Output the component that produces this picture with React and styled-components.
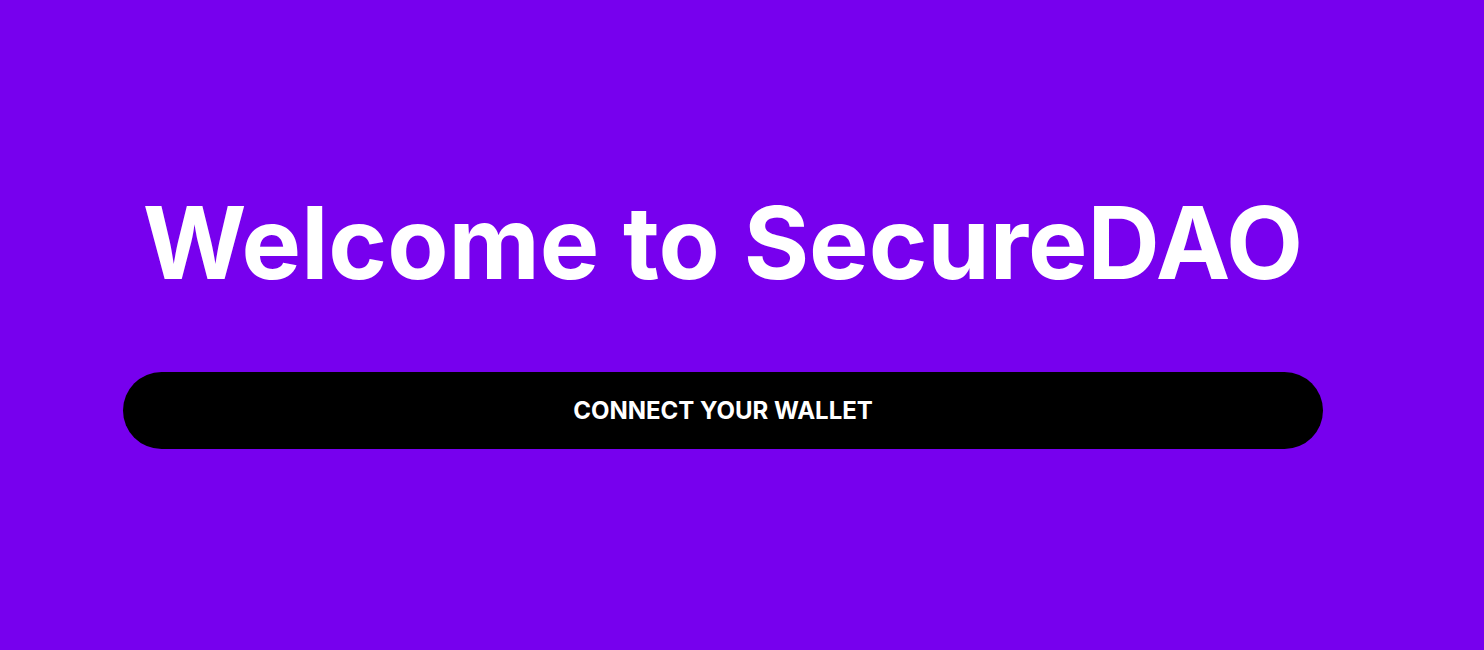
import styled, { createGlobalStyle } from "styled-components"

const GlobalStyle = createGlobalStyle`
html, body {
margin: 0;
padding: 0;
background: #7700ee;
}
body {
font-family: Inter, "Liberation Sans", sans-serif;
}
`

const Page = styled.main`
min-height: 650px;
background: #7700ee;
padding: 182px 0 0 123px;
box-sizing: border-box;
`

const Column = styled.div`
width: 1200px;
display: flex;
flex-direction: column;
align-items: center;
gap: 69px;
`

const Title = styled.h1`
margin: 0;
color: #ffffff;
font-size: 100px;
font-weight: 700;
line-height: 121px;
letter-spacing: 0;
`

const WalletButton = styled.button`
width: 1200px;
height: 77px;
border: none;
border-radius: 39px;
background: #000000;
color: #ffffff;
font-family: Inter, "Liberation Sans", sans-serif;
font-size: 24px;
font-weight: 700;
cursor: pointer;
`

function App() {
    return (
        <>
            <GlobalStyle />
            <Page>
                <Column>
                    <Title>Welcome to SecureDAO</Title>
                    <WalletButton>CONNECT YOUR WALLET</WalletButton>
                </Column>
            </Page>
        </>
    )
}

export default App
